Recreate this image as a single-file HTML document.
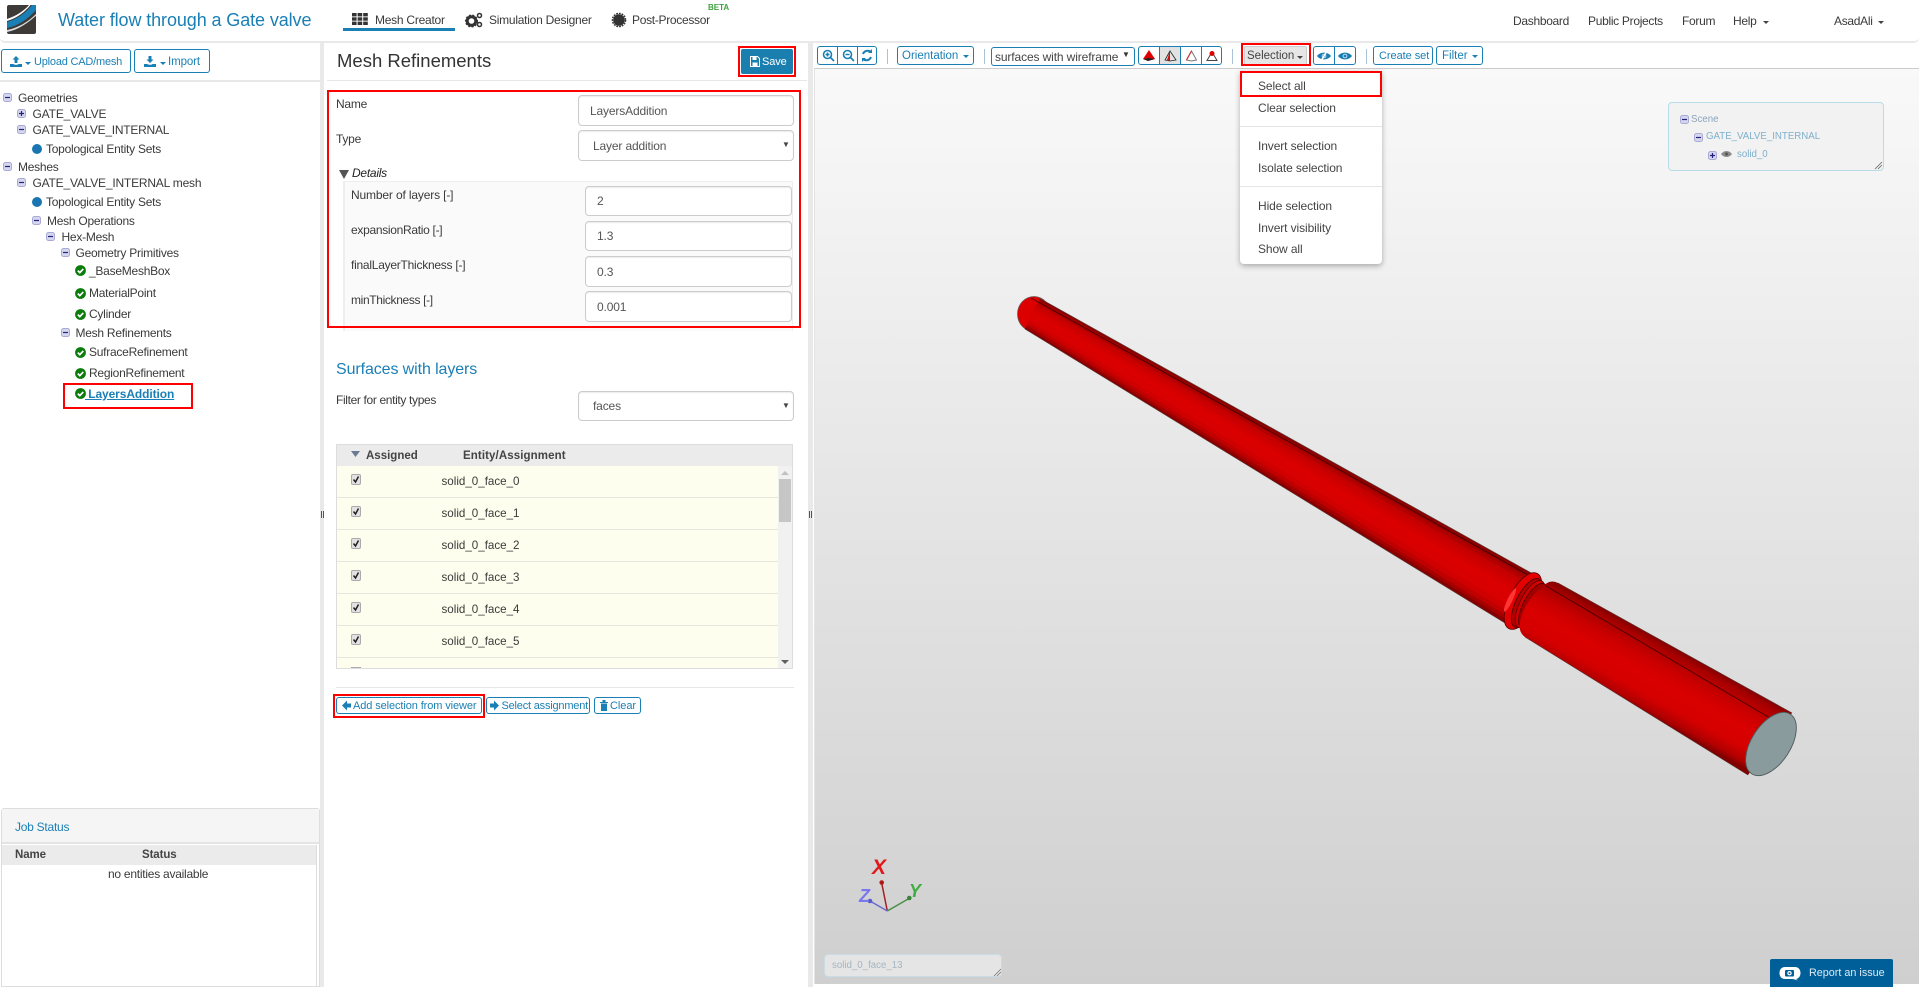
<!DOCTYPE html>
<html lang="en"><head><meta charset="utf-8"><title>Water flow through a Gate valve</title>
<style>
html,body{margin:0;padding:0;background:#fff;width:1919px;height:987px;overflow:hidden;font-family:"Liberation Sans",sans-serif}
.a{position:absolute;box-sizing:border-box}
.t{position:absolute;white-space:nowrap;line-height:16px;font-size:12px;letter-spacing:-.25px;color:#3a3a3a}
.bl{color:#1a7fb5}
.b{position:absolute;box-sizing:border-box;border:1px solid #1a7fb5;border-radius:3px;background:#fff}
.r{position:absolute;box-sizing:border-box;border:2px solid #f00;z-index:6}
.c{position:absolute;width:0;height:0;border-top:3px solid #1a7fb5;border-left:3px solid transparent;border-right:3px solid transparent}
.in{position:absolute;box-sizing:border-box;background:#fff;border:1px solid #ccc;border-radius:4px;box-shadow:inset 0 1px 1px rgba(0,0,0,.08);font:12px "Liberation Sans",sans-serif;color:#555;padding:0 11px;letter-spacing:-.15px;outline:0}
.sep{position:absolute;width:1px;height:15px;top:49px;background:#a9c3d6}
.ln{position:absolute;background:#e7e7e7}
svg.i{position:absolute;overflow:visible}
.row{position:absolute;left:337px;width:441px;height:32px;background:#fefeee;border-bottom:1px solid #e6e6dc;box-sizing:border-box}
.cb{position:absolute;left:351px;width:10px;height:11px;box-sizing:border-box;background:#e2e2e2;border:1px solid #aaa;border-radius:2px}
.it{font-size:12px;letter-spacing:-.1px;color:#444}
</style></head><body>
<svg width="0" height="0" style="position:absolute">
<defs>
<symbol id="mn" viewBox="0 0 9 9"><rect x=".5" y=".5" width="8" height="8" rx="2" fill="#d5d6ee" stroke="#a9abd6"/><path d="M2 4.5h5" stroke="#22227a" stroke-width="1.2"/></symbol>
<symbol id="pl" viewBox="0 0 9 9"><rect x=".5" y=".5" width="8" height="8" rx="2" fill="#d5d6ee" stroke="#a9abd6"/><path d="M2 4.5h5M4.5 2v5" stroke="#22227a" stroke-width="1.2"/></symbol>
<symbol id="ck" viewBox="0 0 11 11"><circle cx="5.5" cy="5.5" r="5.4" fill="#0b7c0b"/><path d="M2.8 5.6l2 2 3.5-3.7" fill="none" stroke="#fff" stroke-width="1.7"/></symbol>
<symbol id="eye" viewBox="0 0 14 10"><path d="M0 5C3 .5 11 .5 14 5 11 9.500 3 9.500 0 5z" fill="#1a7fb5"/><circle cx="7" cy="5" r="2.300" fill="#cfe4f0"/><circle cx="7" cy="5" r="1.400" fill="#1a7fb5"/></symbol>
<linearGradient id="p2" gradientUnits="userSpaceOnUse" x1="1650" y1="636" x2="1616" y2="698">
<stop offset="0" stop-color="#8c0000"/><stop offset=".08" stop-color="#a80000"/><stop offset=".22" stop-color="#c00000"/><stop offset=".3" stop-color="#cc0000"/><stop offset=".5" stop-color="#da0000"/><stop offset=".76" stop-color="#d40000"/><stop offset=".92" stop-color="#b00000"/><stop offset="1" stop-color="#800000"/></linearGradient>
</defs></svg>

<!-- header -->
<div class="a" style="left:0;top:0;width:1919px;height:43px;border-bottom:2px solid #e9e9e9;border-radius:0 0 5px 5px"></div>
<svg class="i" style="left:7px;top:5px" width="29" height="29" viewBox="0 0 29 29"><rect width="29" height="29" rx="2" fill="#3d3a38"/><path d="M0 17C10 14 19 8 25 0h4v5C21 14 11 21 0 23z" fill="#1a7fb5"/><path d="M0 14C9 11 17 6 22 0h1.500C18 7 10 13 0 16z" fill="#fff"/><path d="M0 25C11 23 21 17 29 9v1.800C21 18 11 25 0 27z" fill="#ddd"/></svg>
<div class="t bl" style="left:58px;top:11px;font-size:18px;line-height:18px;letter-spacing:-.1px;color:#1a7fb5">Water flow through a Gate valve</div>
<svg class="i" style="left:352px;top:13px" width="16" height="12" viewBox="0 0 16 12" fill="#333"><rect width="4.600" height="3.400"/><rect x="5.600" width="4.600" height="3.400"/><rect x="11.200" width="4.600" height="3.400"/><rect y="4.300" width="4.600" height="3.400"/><rect x="5.600" y="4.300" width="4.600" height="3.400"/><rect x="11.200" y="4.300" width="4.600" height="3.400"/><rect y="8.600" width="4.600" height="3.400"/><rect x="5.600" y="8.600" width="4.600" height="3.400"/><rect x="11.200" y="8.600" width="4.600" height="3.400"/></svg>
<div class="t" style="left:375px;top:12px">Mesh Creator</div>
<div class="a" style="left:343px;top:28px;width:112px;height:2.500px;background:#1a7fb5"></div>
<svg class="i" style="left:465px;top:12px" width="18" height="16" viewBox="0 0 18 16"><circle cx="6.500" cy="9" r="4.300" fill="none" stroke="#333" stroke-width="3"/><circle cx="6.500" cy="9" r="5.800" fill="none" stroke="#333" stroke-width="1.500" stroke-dasharray="2 1.500"/><circle cx="14.500" cy="3.500" r="2" fill="none" stroke="#333" stroke-width="1.500"/><circle cx="14.500" cy="12.500" r="2" fill="none" stroke="#333" stroke-width="1.500"/></svg>
<div class="t" style="left:489px;top:12px">Simulation Designer</div>
<svg class="i" style="left:612px;top:13px" width="14" height="14" viewBox="0 0 14 14"><circle cx="7" cy="7" r="5.800" fill="#333"/><circle cx="7" cy="7" r="6.600" fill="none" stroke="#333" stroke-width="1.400" stroke-dasharray="1.800 1"/></svg>
<div class="t" style="left:632px;top:12px;letter-spacing:-.3px">Post-Processor</div>
<div class="t" style="left:708px;top:0;font-size:8px;font-weight:bold;letter-spacing:0;color:#3ea33e">BETA</div>
<div class="t" style="left:1513px;top:13px;letter-spacing:-.3px">Dashboard</div>
<div class="t" style="left:1588px;top:13px;letter-spacing:-.3px">Public Projects</div>
<div class="t" style="left:1682px;top:13px;letter-spacing:-.3px">Forum</div>
<div class="t" style="left:1733px;top:13px;letter-spacing:-.3px">Help</div>
<div class="c" style="left:1763px;top:21px;border-top-color:#444"></div>
<div class="t" style="left:1834px;top:13px;letter-spacing:-.3px">AsadAli</div>
<div class="c" style="left:1878px;top:21px;border-top-color:#444"></div>

<!-- splitters -->
<div class="a" style="left:320px;top:43px;width:4px;height:944px;background:#e9e9e9"></div>
<div class="a" style="left:808px;top:43px;width:5px;height:944px;background:#e9e9e9"></div>
<div class="a" style="left:321px;top:511px;width:3px;height:7px;border-left:1px solid #555;border-right:1px solid #555"></div>
<div class="a" style="left:809px;top:511px;width:3px;height:7px;border-left:1px solid #555;border-right:1px solid #555"></div>

<!-- left panel -->
<div class="b" style="left:1px;top:49px;width:130px;height:24px"></div>
<svg class="i" style="left:10px;top:56px" width="12" height="11" viewBox="0 0 12 11" fill="#1a7fb5"><path d="M6 0l3.500 3.500H7.500V7h-3V3.500H2.500zM0 8h3.500c.5 1 4.500 1 5 0H12v3H0z"/></svg>
<div class="c" style="left:25px;top:62px"></div>
<div class="t bl" style="left:34px;top:54px;font-size:11px;letter-spacing:-.2px">Upload CAD/mesh</div>
<div class="b" style="left:134px;top:49px;width:76px;height:24px"></div>
<svg class="i" style="left:144px;top:56px" width="12" height="11" viewBox="0 0 12 11" fill="#1a7fb5"><path d="M4.500 0h3v3.500h2L6 7 2.500 3.500h2zM0 8h3.500c.5 1 4.500 1 5 0H12v3H0z"/></svg>
<div class="c" style="left:160px;top:62px"></div>
<div class="t bl" style="left:168px;top:54px;font-size:11.500px;letter-spacing:-.1px">Import</div>
<div class="ln" style="left:0;top:80px;width:320px;height:2px"></div>

<svg class="i" style="left:3px;top:93px" width="9" height="9"><use href="#mn"/></svg><div class="t" style="left:18px;top:90px">Geometries</div>
<svg class="i" style="left:17px;top:109px" width="9" height="9"><use href="#pl"/></svg><div class="t" style="left:32.500px;top:106px;letter-spacing:-.15px">GATE_VALVE</div>
<svg class="i" style="left:17px;top:125px" width="9" height="9"><use href="#mn"/></svg><div class="t" style="left:32.500px;top:122px;letter-spacing:-.25px">GATE_VALVE_INTERNAL</div>
<svg class="i" style="left:32px;top:144px" width="10" height="10"><circle cx="5" cy="5" r="5" fill="#1a76b0"/></svg><div class="t" style="left:46px;top:141px">Topological Entity Sets</div>
<svg class="i" style="left:3px;top:162px" width="9" height="9"><use href="#mn"/></svg><div class="t" style="left:18px;top:159px">Meshes</div>
<svg class="i" style="left:17px;top:178px" width="9" height="9"><use href="#mn"/></svg><div class="t" style="left:32.500px;top:175px;letter-spacing:-.2px">GATE_VALVE_INTERNAL mesh</div>
<svg class="i" style="left:32px;top:197px" width="10" height="10"><circle cx="5" cy="5" r="5" fill="#1a76b0"/></svg><div class="t" style="left:46px;top:194px">Topological Entity Sets</div>
<svg class="i" style="left:32px;top:216px" width="9" height="9"><use href="#mn"/></svg><div class="t" style="left:47px;top:213px">Mesh Operations</div>
<svg class="i" style="left:46px;top:232px" width="9" height="9"><use href="#mn"/></svg><div class="t" style="left:61.500px;top:229px">Hex-Mesh</div>
<svg class="i" style="left:61px;top:248px" width="9" height="9"><use href="#mn"/></svg><div class="t" style="left:75.500px;top:245px">Geometry Primitives</div>
<svg class="i" style="left:75px;top:265px" width="11" height="11"><use href="#ck"/></svg><div class="t" style="left:89px;top:263px">_BaseMeshBox</div>
<svg class="i" style="left:75px;top:288px" width="11" height="11"><use href="#ck"/></svg><div class="t" style="left:89px;top:285px">MaterialPoint</div>
<svg class="i" style="left:75px;top:309px" width="11" height="11"><use href="#ck"/></svg><div class="t" style="left:89px;top:306px">Cylinder</div>
<svg class="i" style="left:61px;top:328px" width="9" height="9"><use href="#mn"/></svg><div class="t" style="left:75.500px;top:325px">Mesh Refinements</div>
<svg class="i" style="left:75px;top:347px" width="11" height="11"><use href="#ck"/></svg><div class="t" style="left:89px;top:344px">SufraceRefinement</div>
<svg class="i" style="left:75px;top:368px" width="11" height="11"><use href="#ck"/></svg><div class="t" style="left:89px;top:365px">RegionRefinement</div>
<svg class="i" style="left:75px;top:388px" width="11" height="11"><use href="#ck"/></svg><div class="t bl" style="left:85px;top:386px;font-weight:bold;letter-spacing:-.1px;text-decoration:underline">&nbsp;LayersAddition</div>
<div class="r" style="left:63px;top:383px;width:130px;height:26px"></div>

<!-- job status -->
<div class="a" style="left:1px;top:808px;width:319px;height:179px;border:1px solid #ddd;border-radius:3px 3px 0 0;background:#fff"></div>
<div class="a" style="left:2px;top:809px;width:317px;height:35px;background:#f5f5f5;border-bottom:2px solid #e4e4e4"></div>
<div class="t bl" style="left:15px;top:819px">Job Status</div>
<div class="a" style="left:2px;top:845px;width:314px;height:20px;background:#ebebeb"></div>
<div class="t" style="left:15px;top:847px;font-weight:bold;font-size:11.500px;letter-spacing:-.1px;color:#444">Name</div>
<div class="t" style="left:142px;top:847px;font-weight:bold;font-size:11.500px;letter-spacing:-.1px;color:#444">Status</div>
<div class="t" style="left:108px;top:866px">no entities available</div>
<div class="a" style="left:316px;top:845px;width:1px;height:142px;background:#ddd"></div>

<!-- middle -->
<div class="t" style="left:337px;top:51px;font-size:18.500px;line-height:20px;letter-spacing:0;color:#333">Mesh Refinements</div>
<div class="a" style="left:741px;top:49px;width:52px;height:25px;background:#1a7fae;border-radius:2px"></div>
<svg class="i" style="left:750px;top:56px" width="10" height="11" viewBox="0 0 10 11"><path d="M.5.500h7l2 2v8h-9z" fill="none" stroke="#fff"/><rect x="2.500" y="1" width="4" height="3" fill="#fff"/><rect x="2.500" y="6.500" width="5" height="3.500" fill="#fff"/></svg>
<div class="t" style="left:762px;top:54px;font-size:11px;color:#fff;letter-spacing:-.1px">Save</div>
<div class="r" style="left:738px;top:46px;width:58px;height:31px"></div>
<div class="ln" style="left:327px;top:80px;width:480px;height:1px"></div>
<div class="r" style="left:327px;top:90px;width:474px;height:238px"></div>

<div class="t" style="left:336px;top:96px">Name</div>
<input class="in" style="left:578px;top:95px;width:216px;height:31px" value="LayersAddition">
<div class="t" style="left:336px;top:131px">Type</div>
<div class="in" style="left:578px;top:130px;width:216px;height:31px;line-height:30px;padding-left:14px">Layer addition</div>
<div class="t" style="left:782px;top:137px;font-size:8px;color:#444;letter-spacing:0">▼</div>
<svg class="i" style="left:339px;top:170px" width="10" height="9"><path d="M0 0h10L5 9z" fill="#555"/></svg>
<div class="t" style="left:352px;top:165px;font-style:italic;color:#222">Details</div>
<div class="a" style="left:343px;top:181px;width:450px;height:150px;background:#fafafa;border-top:1px solid #eee;border-left:2px solid #eee;border-right:1px solid #eee"></div>
<div class="t" style="left:351px;top:187px;letter-spacing:-.15px">Number of layers [-]</div>
<input class="in" style="left:585px;top:186px;width:207px;height:30px" value="2">
<div class="t" style="left:351px;top:222px;letter-spacing:-.3px">expansionRatio [-]</div>
<input class="in" style="left:585px;top:221px;width:207px;height:30px" value="1.3">
<div class="t" style="left:351px;top:257px;letter-spacing:-.25px">finalLayerThickness [-]</div>
<input class="in" style="left:585px;top:256px;width:207px;height:31px" value="0.3">
<div class="t" style="left:351px;top:292px;letter-spacing:-.35px">minThickness [-]</div>
<input class="in" style="left:585px;top:291px;width:207px;height:31px" value="0.001">

<div class="t bl" style="left:336px;top:361px;font-size:16px;line-height:18px;letter-spacing:-.1px">Surfaces with layers</div>
<div class="t" style="left:336px;top:392px;letter-spacing:-.35px">Filter for entity types</div>
<div class="in" style="left:578px;top:391px;width:216px;height:30px;line-height:29px;padding-left:14px">faces</div>
<div class="t" style="left:782px;top:398px;font-size:8px;color:#444;letter-spacing:0">▼</div>

<div class="a" style="left:336px;top:444px;width:457px;height:225px;border:1px solid #ddd;background:#fefeee"></div>
<div class="a" style="left:337px;top:445px;width:455px;height:21px;background:#ebebeb"></div>
<svg class="i" style="left:351px;top:451px" width="9" height="6"><path d="M0 0h9L4.500 6z" fill="#6a7a90"/></svg>
<div class="t" style="left:366px;top:448px;font-weight:bold;font-size:11.500px;letter-spacing:0;color:#444">Assigned</div>
<div class="t" style="left:463px;top:448px;font-weight:bold;font-size:11.500px;letter-spacing:.1px;color:#444">Entity/Assignment</div>
<div class="row" style="top:466px"></div><div class="row" style="top:498px"></div><div class="row" style="top:530px"></div><div class="row" style="top:562px"></div><div class="row" style="top:594px"></div><div class="row" style="top:626px"></div>
<div class="cb" style="top:474px"></div><div class="cb" style="top:506px"></div><div class="cb" style="top:538px"></div><div class="cb" style="top:570px"></div><div class="cb" style="top:602px"></div><div class="cb" style="top:634px"></div>
<svg class="i" style="left:351px;top:474px" width="10" height="170" fill="none" stroke="#222" stroke-width="1.500"><path d="M2.500 5.500l2 2.500 3-5.500M2.500 37.500l2 2.500 3-5.500M2.500 69.500l2 2.500 3-5.500M2.500 101.500l2 2.500 3-5.500M2.500 133.500l2 2.500 3-5.500M2.500 165.500l2 2.500 3-5.500"/></svg>
<div class="a" style="left:351px;top:667px;width:10px;height:1px;background:#aaa"></div>
<div class="t" style="left:441.500px;top:474px;font-size:11.600px;letter-spacing:0">solid_0_face_0</div>
<div class="t" style="left:441.500px;top:506px;font-size:11.600px;letter-spacing:0">solid_0_face_1</div>
<div class="t" style="left:441.500px;top:538px;font-size:11.600px;letter-spacing:0">solid_0_face_2</div>
<div class="t" style="left:441.500px;top:570px;font-size:11.600px;letter-spacing:0">solid_0_face_3</div>
<div class="t" style="left:441.500px;top:602px;font-size:11.600px;letter-spacing:0">solid_0_face_4</div>
<div class="t" style="left:441.500px;top:634px;font-size:11.600px;letter-spacing:0">solid_0_face_5</div>
<div class="a" style="left:778px;top:466px;width:14px;height:202px;background:#f1f1f1"></div>
<div class="a" style="left:779px;top:479px;width:12px;height:43px;background:#c6c6c6"></div>
<svg class="i" style="left:781px;top:471px" width="8" height="195"><path d="M4 0l4 4H0z" fill="#c0c0c0"/><path d="M0 189h8l-4 4z" fill="#606060"/></svg>

<div class="ln" style="left:336px;top:687px;width:458px;height:1px"></div>
<div class="b" style="left:336px;top:697px;width:146px;height:17px"></div>
<svg class="i" style="left:342px;top:700px" width="9" height="11"><path d="M0 5.500L5 .5v3h4v4H5v3z" fill="#1a7fb5"/></svg>
<div class="t bl" style="left:353px;top:698px;font-size:11px;letter-spacing:-.1px">Add selection from viewer</div>
<div class="b" style="left:486px;top:697px;width:104px;height:17px"></div>
<svg class="i" style="left:490px;top:700px" width="9" height="11"><path d="M9 5.500L4 .5v3H0v4h4v3z" fill="#1a7fb5"/></svg>
<div class="t bl" style="left:501.500px;top:698px;font-size:11px;letter-spacing:-.2px">Select assignment</div>
<div class="b" style="left:594px;top:697px;width:47px;height:17px"></div>
<svg class="i" style="left:600px;top:700px" width="8" height="11" fill="#1a7fb5"><path d="M0 2h8v1H0zM2.500 0h3v2h-3zM1 3.500h6V11H1z"/></svg>
<div class="t bl" style="left:610px;top:698px;font-size:11px;letter-spacing:-.05px">Clear</div>
<div class="r" style="left:333px;top:694px;width:152px;height:24px"></div>

<!-- viewer toolbar -->
<div class="b" style="left:817px;top:46px;width:60px;height:19px"></div>
<div class="a" style="left:837px;top:46px;width:1px;height:19px;background:#1a7fb5"></div>
<div class="a" style="left:857px;top:46px;width:1px;height:19px;background:#1a7fb5"></div>
<svg class="i" style="left:822px;top:49px" width="50" height="13" fill="none" stroke="#1a7fb5" stroke-width="1.600"><circle cx="5.500" cy="5.500" r="4"/><path d="M8.500 8.500l3.500 3.500M3.500 5.500h4M5.500 3.500v4"/><circle cx="25.500" cy="5.500" r="4"/><path d="M28.500 8.500l3.500 3.500M23.500 5.500h4"/><path d="M41 5a5 5 0 0 1 8-2M49 8a5 5 0 0 1-8 2" stroke-width="2"/><path d="M50 0v4h-4zM40 13V9h4z" fill="#1a7fb5" stroke="none"/></svg>
<div class="sep" style="left:887px"></div>
<div class="b" style="left:897px;top:46px;width:77px;height:19px"></div>
<div class="t bl" style="left:902px;top:48px;font-size:11.500px;letter-spacing:0">Orientation</div>
<div class="c" style="left:963px;top:55px"></div>
<div class="sep" style="left:984px"></div>
<div class="b" style="left:991px;top:47px;width:144px;height:19px"></div>
<div class="t" style="left:995px;top:49px;letter-spacing:-.12px;color:#444">surfaces with wireframe</div>
<div class="t" style="left:1122px;top:47px;font-size:8px;letter-spacing:0;color:#333">▼</div>
<div class="b" style="left:1138px;top:46px;width:84px;height:19px"></div>
<div class="a" style="left:1160px;top:47px;width:21px;height:17px;background:#e2e2e2"></div>
<div class="a" style="left:1159px;top:46px;width:1px;height:19px;background:#1a7fb5"></div>
<div class="a" style="left:1180px;top:46px;width:1px;height:19px;background:#1a7fb5"></div>
<div class="a" style="left:1201px;top:46px;width:1px;height:19px;background:#1a7fb5"></div>
<svg class="i" style="left:1142px;top:50px" width="76" height="12"><path d="M7 0L1 9l5 2 7-2z" fill="#e00000"/><path d="M1 9l5 2 7-2-6-1z" fill="#222"/><path d="M28 1l-5 9 5 1 6-1z" fill="#e2e2e2" stroke="#222" stroke-width=".8"/><path d="M28 1l-3 9 3 1z" fill="#d01010"/><path d="M49.500 1l-5 9 5 1 5-1z" fill="#fff" stroke="#777" stroke-width="1"/><path d="M49.500 1l-5 9" stroke="#d03030" stroke-width="1.200"/><path d="M70 2l-5 8.500h10z" fill="#fff" stroke="#444"/><circle cx="70" cy="3.500" r="2.500" fill="#e00000"/></svg>
<div class="sep" style="left:1232px"></div>
<div class="a" style="left:1244px;top:46px;width:63px;height:19px;background:#e6e6e6;border:1px solid #ccc;border-radius:2px"></div>
<div class="t" style="left:1247px;top:48px;font-size:11.500px;letter-spacing:0;color:#444">Selection</div>
<div class="c" style="left:1297px;top:56px;border-top-color:#444"></div>
<div class="r" style="left:1241px;top:43px;width:70px;height:23px"></div>
<div class="b" style="left:1313px;top:46px;width:43px;height:19px"></div>
<div class="a" style="left:1334px;top:46px;width:1px;height:19px;background:#1a7fb5"></div>
<svg class="i" style="left:1317px;top:51px" width="14" height="10"><use href="#eye"/><path d="M10 0L4 10" stroke="#fff" stroke-width="1.600"/></svg>
<svg class="i" style="left:1338px;top:51px" width="14" height="10"><use href="#eye"/></svg>
<div class="sep" style="left:1366px"></div>
<div class="b" style="left:1373px;top:46px;width:60px;height:19px"></div>
<div class="t bl" style="left:1379px;top:48px;font-size:11px;letter-spacing:-.05px">Create set</div>
<div class="b" style="left:1436px;top:46px;width:47px;height:19px"></div>
<div class="t bl" style="left:1442px;top:48px;font-size:11.500px;letter-spacing:0">Filter</div>
<div class="c" style="left:1472px;top:55px"></div>

<!-- viewer -->
<div class="a" style="left:814px;top:68px;width:1105px;height:916px;background:linear-gradient(#f9f9f9,#cfcfcf);border-top:1px solid #ccc;border-left:1px solid #e4e4e4;border-bottom:1px solid #d0d0d0"></div>
<svg class="i" style="left:0;top:0;z-index:1" width="1919" height="987">
<!-- far end cap -->
<ellipse cx="1034" cy="314" rx="16.500" ry="17.500" fill="#dc0000" stroke="#6a5a5a" stroke-width=".8"/>
<!-- part 1: stacked bands, each runs to the lower edge so no seams show -->
<polygon points="1040,298.500 1535,575 1505,623 1025,329" fill="#8c0000"/>
<polygon points="1039.100,300.300 1533.200,577.900 1505,623 1025,329" fill="#a40000"/>
<polygon points="1038.200,302.200 1531.400,580.800 1505,623 1025,329" fill="#b20000"/>
<polygon points="1037.300,304 1529.600,583.600 1505,623 1025,329" fill="#c40000"/>
<polygon points="1036.300,306.100 1527.500,587 1505,623 1025,329" fill="#cc0000"/>
<polygon points="1035.100,308.600 1525.100,590.800 1505,623 1025,329" fill="#d40000"/>
<polygon points="1033.700,311.300 1522.400,595.200 1505,623 1025,329" fill="#da0000"/>
<polygon points="1031.800,315.300 1518.500,601.400 1505,623 1025,329" fill="#d80000"/>
<polygon points="1029.500,319.900 1514,608.600 1505,623 1025,329" fill="#d00000"/>
<polygon points="1028,322.900 1511,613.400 1505,623 1025,329" fill="#be0000"/>
<polygon points="1026.800,325.300 1508.600,617.200 1505,623 1025,329" fill="#a40000"/>
<polygon points="1025.900,327.200 1506.800,620.100 1505,623 1025,329" fill="#860000"/>
<path d="M1031 298L1535 579" stroke="#450000" stroke-width=".9"/>
<path d="M1040 298.500L1535 575M1025 329L1505 623" stroke="#5a4040" stroke-width=".6"/>
<!-- collar -->
<ellipse cx="1523" cy="601" rx="14" ry="31" transform="rotate(27 1523 601)" fill="#e20000" stroke="#500" stroke-width=".8"/>
<ellipse cx="1510" cy="600" rx="2.500" ry="13" transform="rotate(26 1510 600)" fill="#ff3434"/>
<ellipse cx="1527" cy="603" rx="11" ry="27" transform="rotate(27 1527 603)" fill="#b00000" stroke="#400" stroke-width=".8"/>
<ellipse cx="1530" cy="604" rx="10" ry="26" transform="rotate(27 1530 604)" fill="#d00000" stroke="#500" stroke-width=".7"/>
<ellipse cx="1533" cy="606" rx="10" ry="25" transform="rotate(27 1533 606)" fill="#a00000" stroke="#400" stroke-width=".7"/>
<!-- part 2 -->
<path d="M1547 583Q1552 580 1558 583L1792 713L1748 775L1525 637Q1518 632 1520 622Q1524 600 1547 583z" fill="url(#p2)"/>
<path d="M1558 583L1792 713M1525 637L1748 775" stroke="#5a3030" stroke-width=".6" fill="none"/>
<path d="M1546 586L1770 718" stroke="#450000" stroke-width=".9"/>
<ellipse cx="1771" cy="744" rx="19.500" ry="35.500" transform="rotate(33 1771 744)" fill="#8a9b9d" stroke="#505a5a" stroke-width=".9"/>
<!-- axes -->
<path d="M887.300 911L881.700 883" stroke="#a52020" stroke-width="1.500"/><circle cx="881.700" cy="882.500" r="2.300" fill="#b01818"/>
<path d="M887.300 911L909 898.500" stroke="#4a8f4a" stroke-width="1.500"/><circle cx="909.300" cy="898" r="2.300" fill="#3a843a"/>
<path d="M887.300 911L870 901" stroke="#6a6ad0" stroke-width="1.500"/><circle cx="870" cy="901" r="2.300" fill="#5c5cc8"/>
<text x="872" y="874" font-family="Liberation Sans" font-size="21" font-weight="bold" font-style="italic" fill="#e01818">X</text>
<text x="909" y="897" font-family="Liberation Sans" font-size="18" font-weight="bold" font-style="italic" fill="#3fae3f">Y</text>
<text x="859" y="902" font-family="Liberation Sans" font-size="18" font-weight="bold" font-style="italic" fill="#7878ee">Z</text>
</svg>

<!-- scene tree -->
<div class="a" style="left:1668px;top:102px;width:216px;height:69px;border:1px solid #b8dde8;border-radius:4px;background:rgba(238,238,238,.55);z-index:2"></div>
<svg class="i" style="left:1680px;top:115px;z-index:3" width="9" height="9"><use href="#mn"/></svg>
<div class="t" style="left:1691px;top:111px;font-size:9.700px;letter-spacing:0;color:#8aa4bc;z-index:3;margin-top:1px">Scene</div>
<svg class="i" style="left:1694px;top:133px;z-index:3" width="9" height="9"><use href="#mn"/></svg>
<div class="t" style="left:1706px;top:129px;font-size:9.700px;letter-spacing:0;color:#7fb0cc;z-index:3">GATE_VALVE_INTERNAL</div>
<svg class="i" style="left:1708px;top:151px;z-index:3" width="9" height="9"><use href="#pl"/></svg>
<svg class="i" style="left:1721px;top:150px;z-index:3" width="11" height="8"><path d="M0 4C3 0 8 0 11 4 8 8 3 8 0 4z" fill="#8a8a8a"/><circle cx="5.500" cy="4" r="1.500" fill="#555"/></svg>
<div class="t" style="left:1737px;top:147px;font-size:9.700px;letter-spacing:0;color:#7fb0cc;z-index:3">solid_0</div>
<svg class="i" style="left:1874px;top:161px;z-index:3" width="8" height="8"><path d="M1 8L8 1M4 8L8 4" stroke="#666" stroke-width=".8"/></svg>

<!-- dropdown -->
<div class="a" style="left:1240px;top:71px;width:142px;height:193px;background:#fff;border-radius:0 0 4px 4px;box-shadow:0 2px 6px rgba(0,0,0,.3);z-index:4"></div>
<div class="r" style="left:1240px;top:71px;width:142px;height:26px"></div>
<div class="t it" style="left:1258px;top:78px;z-index:5">Select all</div>
<div class="t it" style="left:1258px;top:100px;z-index:5">Clear selection</div>
<div class="a" style="left:1240px;top:126px;width:142px;height:1px;background:#e5e5e5;z-index:5"></div>
<div class="t it" style="left:1258px;top:138px;z-index:5">Invert selection</div>
<div class="t it" style="left:1258px;top:160px;z-index:5">Isolate selection</div>
<div class="a" style="left:1240px;top:186px;width:142px;height:1px;background:#e5e5e5;z-index:5"></div>
<div class="t it" style="left:1258px;top:198px;z-index:5">Hide selection</div>
<div class="t it" style="left:1258px;top:220px;z-index:5">Invert visibility</div>
<div class="t it" style="left:1258px;top:241px;z-index:5">Show all</div>

<!-- status box -->
<div class="a" style="left:824px;top:954px;width:178px;height:23px;border:1px solid #c9dbe4;border-radius:4px;background:rgba(238,238,238,.7);z-index:2"></div>
<div class="t" style="left:832px;top:958px;font-size:9.700px;letter-spacing:0;color:#a4b6c2;z-index:3">solid_0_face_13</div>
<svg class="i" style="left:994px;top:969px;z-index:3" width="7" height="7"><path d="M0 7L7 0M3 7L7 3" stroke="#777" stroke-width=".8"/></svg>

<!-- report -->
<div class="a" style="left:1770px;top:959px;width:123px;height:28px;background:#005f98;border-radius:2px 2px 0 0;z-index:3"></div>
<svg class="i" style="left:1779px;top:966px;z-index:4" width="22" height="15" viewBox="0 0 22 15"><path d="M6 1h10c3.500 0 5.500 2.500 5.500 6s-2 5.500-4.500 6l2 1.500-5-1.500H6C2.500 13 .5 10.500.5 7S2.500 1 6 1z" fill="#fff"/><rect x="6" y="4" width="9" height="6.500" rx="1" fill="#005f98"/><circle cx="10.500" cy="7.200" r="2.200" fill="#fff"/><circle cx="10.500" cy="7.200" r="1" fill="#005f98"/></svg>
<div class="t" style="left:1809px;top:965px;font-size:10.800px;letter-spacing:0;color:#dcebf4;z-index:4">Report an issue</div>
</body></html>
